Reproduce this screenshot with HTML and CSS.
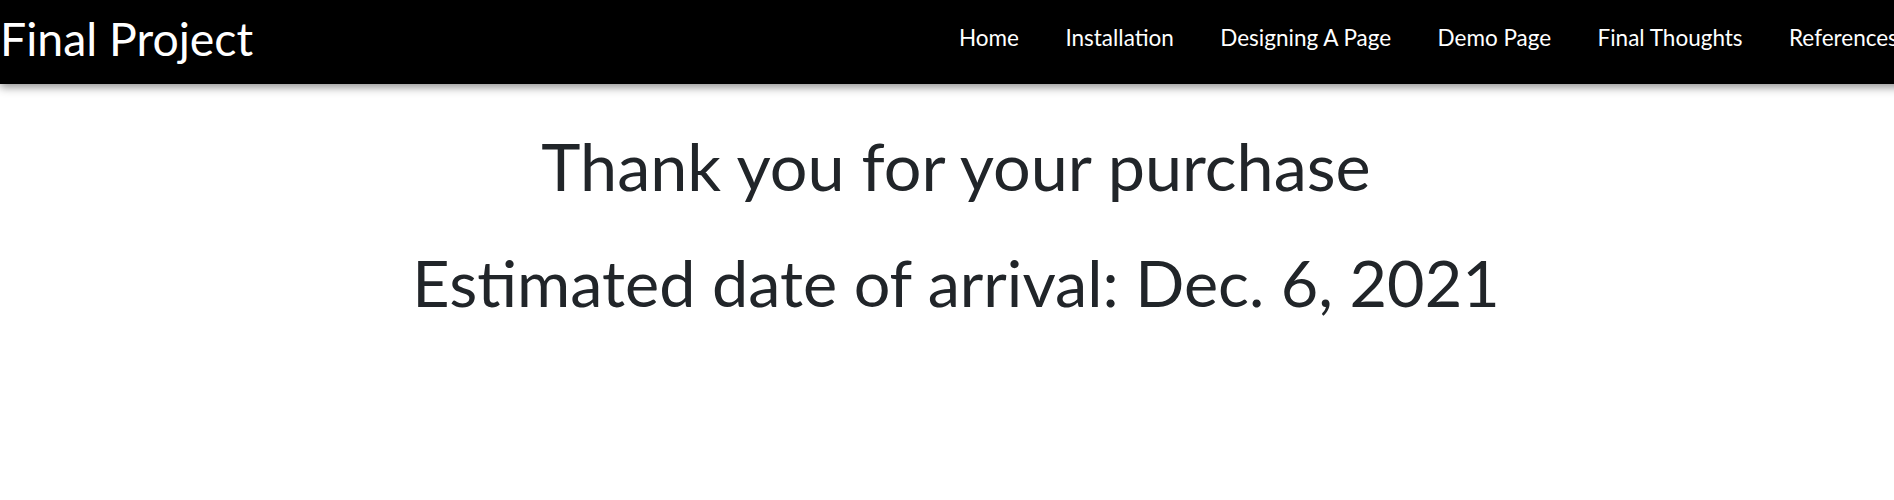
FILE: index.html
```html
<!DOCTYPE html>
<html lang="en">
<head>
<meta charset="utf-8">
<title>Final Project</title>
<link rel="stylesheet" href="styles.css">
</head>
<body>
<div class="page">
  <header class="navbar">
    <a class="brand" href="#">Final Project</a>
    <nav>
      <ul class="nav-list">
        <li><a class="nav-link" href="#">Home</a></li>
        <li><a class="nav-link" href="#">Installation</a></li>
        <li><a class="nav-link" href="#">Designing A Page</a></li>
        <li><a class="nav-link" href="#">Demo Page</a></li>
        <li><a class="nav-link" href="#">Final Thoughts</a></li>
        <li><a class="nav-link" href="#">References</a></li>
      </ul>
    </nav>
  </header>
  <main class="content">
    <h1 class="title">Thank you for your purchase</h1>
    <h2 class="subtitle">Estimated date of arrival: Dec. 6, 2021</h2>
  </main>
</div>
</body>
</html>
```
FILE: styles.css
```css
html, body {
  margin: 0;
  padding: 0;
  background: #fff;
  overflow-x: hidden;
}

body {
  font-family: Lato, "Open Sans", sans-serif;
  color: #212529;
}

.page {
  width: 1912px;
}

.navbar {
  display: grid;
  grid-template-columns: 959px 1fr;
  align-items: start;
  height: 84px;
  background: #000;
  box-shadow: 0 3px 9px rgba(0, 0, 0, 0.45);
  position: relative;
  z-index: 1;
}

.brand {
  display: block;
  padding-top: 11px;
  font-size: 46.4px;
  line-height: 1.2;
  color: #fff;
  text-decoration: none;
  white-space: nowrap;
}

.nav-list {
  display: flex;
  gap: 46.4px;
  margin: 0;
  padding: 24px 0 0 0;
  list-style: none;
  white-space: nowrap;
}

.nav-link {
  display: block;
  font-size: 22.5px;
  line-height: 1.2;
  color: #fff;
  text-decoration: none;
}

.content {
  text-align: center;
  padding-top: 42px;
}

.title {
  margin: 0;
  font-size: 66.5px;
  font-weight: 400;
  line-height: 1.2;
}

.subtitle {
  margin: 38px 0 0 0;
  font-size: 64.7px;
  font-weight: 400;
  line-height: 1.2;
}
```
